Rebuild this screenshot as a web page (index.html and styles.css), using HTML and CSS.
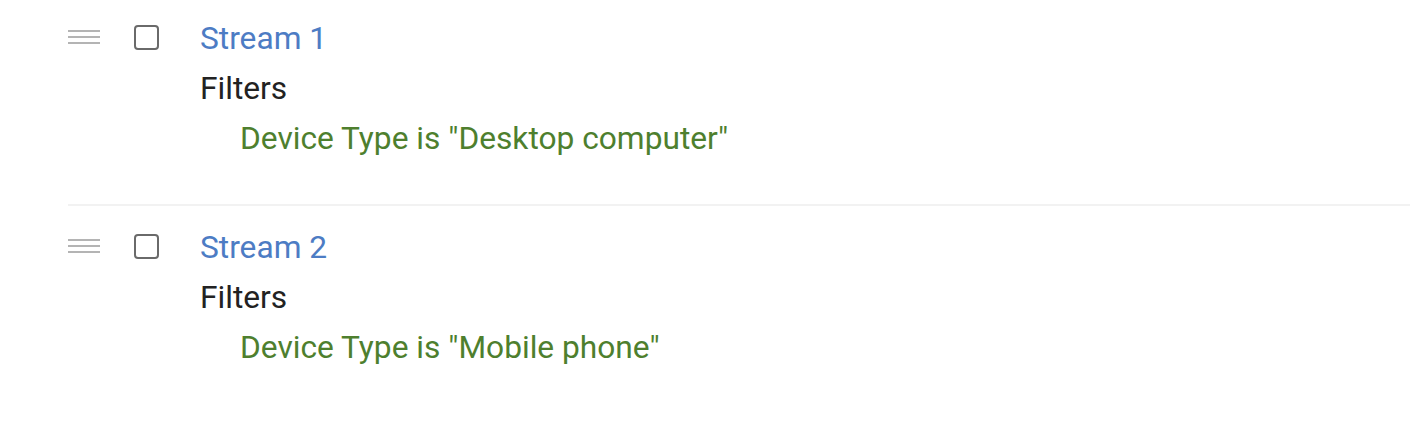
FILE: index.html
```html
<!DOCTYPE html>
<html lang="en">
<head>
  <meta charset="UTF-8">
  <title>Streams</title>
  <link rel="stylesheet" href="styles.css">
</head>
<body>

  <!-- Stream list -->
  <div class="stream-list">

    <div class="stream-row first">
      <div class="handle"><span></span><span></span><span></span></div>
      <div class="check"><span class="box"></span></div>
      <div class="stream-body">
        <a class="stream-name" href="#">Stream 1</a>
        <p class="filters-title">Filters</p>
        <p class="filter">Device Type is "Desktop computer"</p>
      </div>
    </div>

    <div class="stream-row">
      <div class="handle"><span></span><span></span><span></span></div>
      <div class="check"><span class="box"></span></div>
      <div class="stream-body">
        <a class="stream-name" href="#">Stream 2</a>
        <p class="filters-title">Filters</p>
        <p class="filter">Device Type is "Mobile phone"</p>
      </div>
    </div>

  </div>

</body>
</html>
```

FILE: styles.css
```css
body {
  margin: 0;
  font-family: Roboto, "Liberation Sans", Arial, sans-serif;
  background: #fff;
}

.stream-list {
  padding-left: 68px;
}

.stream-row {
  display: flex;
  align-items: flex-start;
  padding: 17px 0 40px 0;
  border-top: 2px solid #f2f2f2;
}

.stream-row.first {
  border-top: none;
  padding-top: 14px;
}

.handle {
  flex: 0 0 32px;
  height: 46px;
  display: flex;
  flex-direction: column;
  justify-content: center;
  gap: 4px;
}

.handle span {
  display: block;
  height: 2px;
  background: #b4b4b4;
}

.check {
  flex: 0 0 100px;
  box-sizing: border-box;
  padding-left: 34px;
  height: 46px;
  display: flex;
  align-items: center;
}

.check .box {
  width: 21px;
  height: 21px;
  border: 2px solid #6a6a6a;
  border-radius: 4px;
}

.stream-body {
  font-size: 31.7px;
  line-height: 50px;
}

.stream-name {
  display: block;
  color: #4d7cc4;
  text-decoration: none;
}

p {
  margin: 0;
}

.filters-title {
  color: #222;
}

.filter {
  padding-left: 40px;
  color: #4e7f2e;
}
```
